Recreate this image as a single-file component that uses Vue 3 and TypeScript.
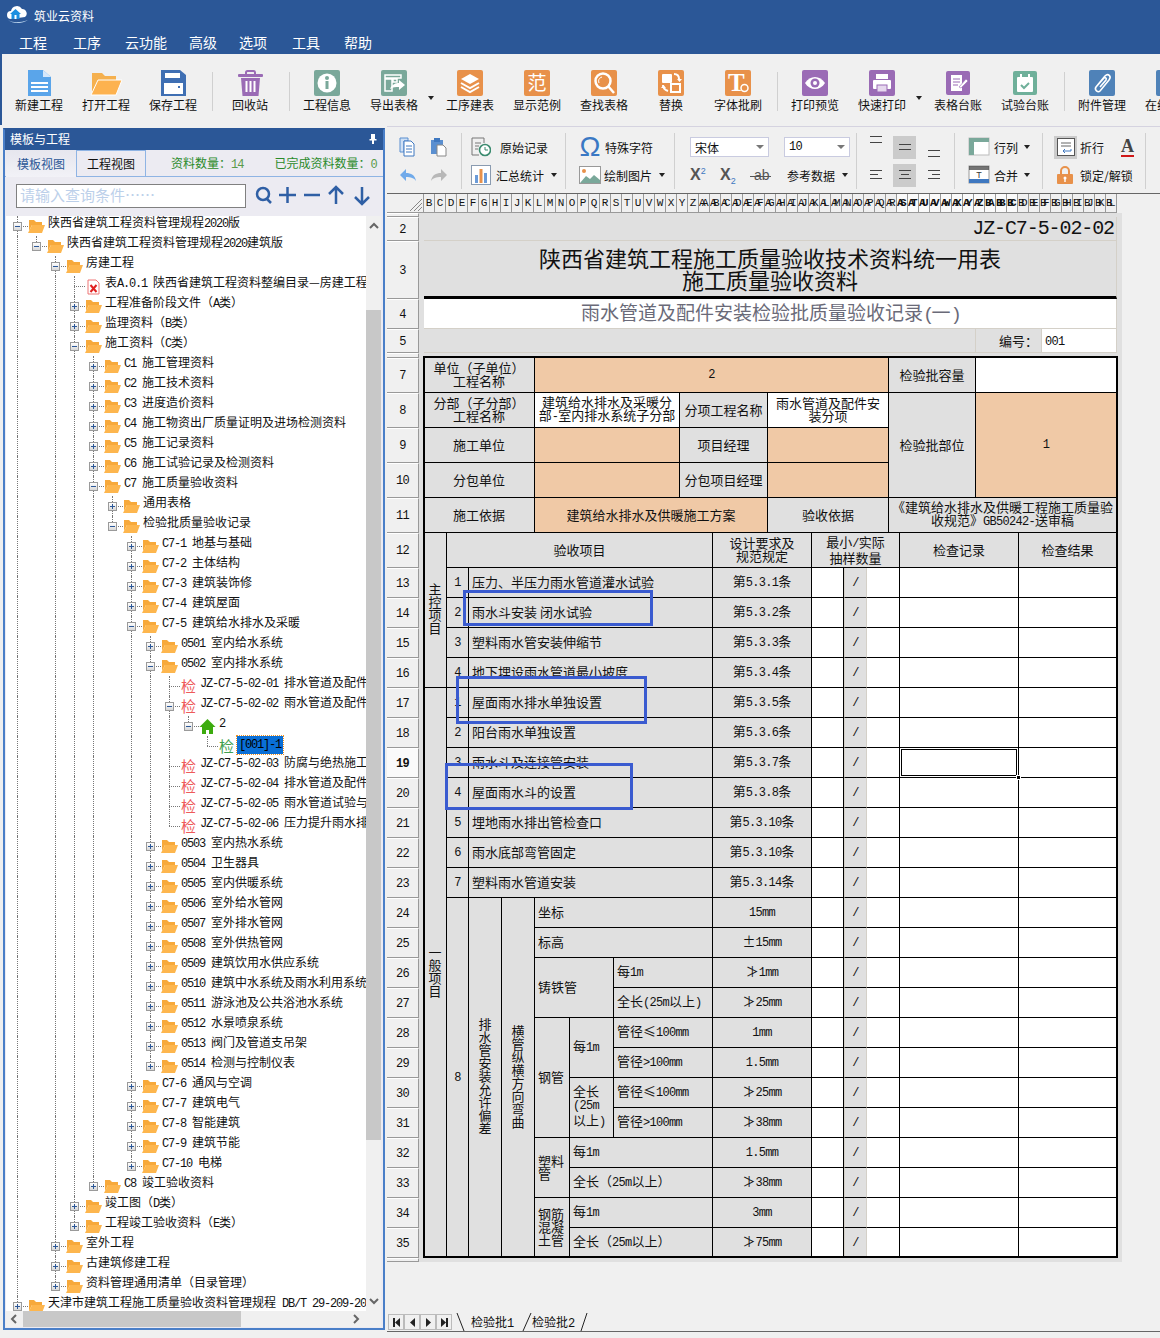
<template>
  <div class="app">
    <header class="titlebar">
      <div class="caption">
        <svg class="logo" width="22" height="18" viewBox="0 0 22 18">
          <path d="M4 13a4 4 0 010-8 6 6 0 0111-2 4.500 4.500 0 013 8z" fill="#fff" />
          <path d="M1 14c5 3 12 3 20 0-6 4-15 4-20 0z" fill="#cfe6fa" />
          <path d="M8.500 3l5.500 5h-1.500v5h-8V8H3z" fill="#1b8fe0" />
          <rect x="7.500" y="9" width="2" height="4" fill="#fff" />
        </svg>
        <span>筑业云资料</span>
      </div>
      <nav class="menu">
        <span v-for="m in menus" :key="m" class="menu-item">{{ m }}</span>
      </nav>
    </header>

    <div class="toolbar">
      <template v-for="(t, i) in tools" :key="i">
        <div v-if="t.sep" class="tool-sep"></div>
        <div v-else-if="t.caret" class="tool-caret"><i class="caret"></i></div>
        <div v-else class="tool">
          <svg :width="t.w || 26" height="26" :viewBox="`0 0 ${t.w || 26} 26`" v-html="t.svg"></svg>
          <span class="tool-label">{{ t.label }}</span>
        </div>
      </template>
    </div>

    <main class="main">
      <aside class="panel">
        <div class="panel-title">
          <span>模板与工程</span>
          <svg width="10" height="10" viewBox="0 0 10 10"><path d="M3 0h4v5h1.500v1.500h-2.500V10H4V6.500H1.500V5H3z" fill="#fff" /></svg>
        </div>
        <div class="panel-tabs">
          <div class="ptab on">模板视图</div>
          <div class="ptab">工程视图</div>
          <div class="stat stat-a">资料数量：<b>14</b></div>
          <div class="stat stat-b">已完成资料数量：<b>0</b></div>
        </div>
        <div class="search">
          <div class="search-input">请输入查询条件……</div>
          <svg class="search-icons" width="118" height="22" viewBox="0 0 118 22" fill="none" stroke="#2f5fa5" stroke-width="2.500">
            <circle cx="9" cy="10" r="6" />
            <path d="M13 15l4 4" />
            <path d="M25 11h17M33.500 3v16" />
            <path d="M50 11h16" />
            <path d="M82 20V4M75 10l7-7 7 7" />
            <path d="M108 3v16M101 13l7 7 7-7" />
          </svg>
        </div>
        <div class="tree-area">
          <div class="tree">
            <div v-for="(n, i) in flat" :key="i" class="node">
              <span v-for="(g, j) in n.guides" :key="j" class="guide" :class="{ on: g }"></span>
              <span class="branch" :class="{ more: n.more }">
                <span v-if="n.box" class="box" :class="{ plus: n.box === '+' }"></span>
              </span>
              <svg v-if="n.kind === 'folder'" class="ico" width="17" height="14" viewBox="0 0 17 14">
                <path d="M1 1h5l2 2h6v3H4L1 12z" fill="#f7a93b" />
                <path d="M4 6h13l-3 8H0z" fill="#fdb64e" />
              </svg>
              <svg v-else-if="n.kind === 'pdf'" class="ico" width="16" height="16" viewBox="0 0 16 16">
                <path d="M2.500 1h8l3 3v11h-11z" fill="#fff" stroke="#ee7777" />
                <path d="M5 6l6 7M11 6l-6 7" stroke="#e02020" stroke-width="2" />
              </svg>
              <svg v-else-if="n.kind === 'home'" class="ico" width="17" height="16" viewBox="0 0 17 16">
                <path d="M8.500 0l8 8H14v7h-4v-4H7v4H3V8H.500z" fill="#3cab0e" />
              </svg>
              <span v-else class="jian" :class="{ ok: n.kind === 'pass' }">检</span>
              <span class="label" :class="{ sel: n.kind === 'pass' }">
                <span v-for="(p, j) in parts(n.text)" :key="j" :class="{ lat: p.lat }">{{ p.s }}</span>
              </span>
            </div>
          </div>
          <div class="vbar">
            <svg class="chev" width="10" height="20" viewBox="0 0 10 20"><path d="M1 12l4-4 4 4" fill="none" stroke="#666" stroke-width="2" /></svg>
            <div class="vthumb"></div>
            <svg class="chev chev-end" width="10" height="20" viewBox="0 0 10 20"><path d="M1 8l4 4 4-4" fill="none" stroke="#666" stroke-width="2" /></svg>
          </div>
        </div>
        <div class="hbar">
          <svg width="17" height="16" viewBox="0 0 17 16"><path d="M10 4L6 8l4 4" fill="none" stroke="#666" stroke-width="2" /></svg>
          <div class="hthumb"></div>
          <svg class="hbar-r" width="12" height="16" viewBox="0 0 12 16"><path d="M4 4l4 4-4 4" fill="none" stroke="#666" stroke-width="2" /></svg>
        </div>
      </aside>

      <section class="work">
        <div class="bar2">
          <div class="g g1">
            <svg width="20" height="20" viewBox="0 0 20 20" v-html="ic.copy"></svg>
            <svg width="20" height="20" viewBox="0 0 20 20" v-html="ic.paste"></svg>
            <svg width="20" height="18" viewBox="0 0 20 18" v-html="ic.undo"></svg>
            <svg width="20" height="18" viewBox="0 0 20 18" v-html="ic.redo"></svg>
          </div>
          <div class="g g2">
            <div class="rowi gap9"><svg width="20" height="20" viewBox="0 0 20 20" v-html="ic.record"></svg>原始记录</div>
            <div class="rowi gap5"><svg width="20" height="20" viewBox="0 0 20 20" v-html="ic.stat"></svg>汇总统计<i class="caret c-l"></i></div>
          </div>
          <div class="g g3">
            <div class="rowi gap4"><span class="omega">Ω</span>特殊字符</div>
            <div class="rowi gap3"><svg width="22" height="20" viewBox="0 0 22 20" v-html="ic.pic"></svg>绘制图片<i class="caret c-l"></i></div>
          </div>
          <div class="g g4">
            <div class="rowi">
              <div class="select s-font"><span>宋体</span><i class="caret gray"></i></div>
              <div class="select s-size"><span class="lat">10</span><i class="caret gray"></i></div>
            </div>
            <div class="rowi">
              <span class="fx">X<sup>2</sup></span>
              <span class="fx">X<sub>2</sub></span>
              <span class="fx strike">ab</span>
              <span class="ref">参考数据</span><i class="caret c-l"></i>
            </div>
          </div>
          <div class="g g5">
            <span v-for="(a, i) in aligns" :key="i" class="al" :class="a.cls">
              <svg width="18" height="12" viewBox="0 0 18 12" fill="none" stroke="#444"><path :d="a.d" /></svg>
            </span>
          </div>
          <div class="g g6">
            <div class="rowi gap3"><svg width="24" height="20" viewBox="0 0 24 20" v-html="ic.rows"></svg>行列<i class="caret c-l2"></i></div>
            <div class="rowi gap3"><svg width="24" height="20" viewBox="0 0 24 20" v-html="ic.merge"></svg>合并<i class="caret c-l2"></i></div>
          </div>
          <div class="g g7">
            <div class="rowi">
              <span class="wrapb"><svg width="18" height="18" viewBox="0 0 18 18" v-html="ic.wrap"></svg></span>
              <span class="wrapt">折行</span>
              <span class="fontA">A</span>
            </div>
            <div class="rowi lockrow"><svg width="16" height="18" viewBox="0 0 16 18" v-html="ic.lock"></svg>锁定/解锁</div>
          </div>
        </div>

        <div class="colhdr">
          <div class="corner">
            <svg width="14" height="14" viewBox="0 0 14 14" fill="none" stroke="#888"><path d="M1 13L13 1M5 13l8-8M9 13l4-4" /></svg>
          </div>
          <div v-for="c in cols" :key="c.name" class="colcell" :class="{ wide: c.name.length > 1, cur: c.cur }">{{ c.name }}</div>
        </div>

        <div class="sheet">
          <div v-for="r in 36" :key="'r' + r" class="rowhdr" :class="{ cur: r === 19 }" :style="{ gridRow: r }">
            <span v-if="r > 1 && r !== 6 && r !== 36" class="lat">{{ r }}</span>
          </div>
          <div v-for="(c, i) in cells" :key="i" class="cell" :class="c.cls"
            :style="{ gridRow: `${c.r} / span ${c.rs}`, gridColumn: `${c.c1} / ${c.c2}` }">
            <div class="txt">
              <span v-for="(p, j) in parts(c.t)" :key="j" :class="{ lat: p.lat }">{{ p.s }}</span>
            </div>
          </div>
          <div class="frame"></div>
          <div class="mark mark-a"></div>
          <div class="mark mark-b"></div>
          <div class="mark mark-c"></div>
        </div>

        <div class="tabs">
          <div class="nav">
            <span v-for="(d, i) in navIcons" :key="i" class="nav-btn">
              <svg width="9" height="9" viewBox="0 0 9 9"><path :d="d" fill="#222" /></svg>
            </span>
          </div>
          <svg class="slant" width="9" height="18" viewBox="0 0 9 18"><path d="M1 0l7 18" stroke="#222" /></svg>
          <span class="stab st1"><span>检验批</span><span class="lat">1</span></span>
          <svg class="slant" width="11" height="18" viewBox="0 0 11 18"><path d="M10 0L2 18" stroke="#222" /></svg>
          <span class="stab st2"><span>检验批</span><span class="lat">2</span></span>
          <svg class="slant" width="8" height="18" viewBox="0 0 8 18"><path d="M7 0L1 18" stroke="#222" /></svg>
        </div>
      </section>
    </main>
  </div>
</template>

<script setup lang="ts">
type Cell = { r: number; rs: number; c1: number; c2: number; t: string; cls: string }

const menus = ['工程', '工序', '云功能', '高级', '选项', '工具', '帮助']

// toolbar glyphs, each tile is 26x26
const tile = (c: string, inner: string, w = 26) => `<rect width="${w}" height="26" rx="2" fill="${c}"/>${inner}`
const ORANGE = '#e8914a'
const TEAL = '#7aa89a'
const PURPLE = '#9a6bb5'

const tools: Array<{ label?: string; svg?: string; w?: number; sep?: boolean; caret?: boolean }> = [
  { label: '新建工程', w: 25, svg: '<path d="M1 0h15l8 7v19H1z" fill="#5aa5ea"/><path d="M16 0l8 7h-8z" fill="#d6e8fb"/><path d="M4 13h17M4 17h17M4 21h17" stroke="#fff" stroke-width="2"/>' },
  { label: '打开工程', w: 32, svg: '<path d="M2 3h10l3 3h11v5H8L2 24z" fill="#f5b04e"/><path d="M8 10h24l-6 15H1z" fill="#fdb24f" stroke="#fff"/>' },
  { label: '保存工程', w: 25, svg: '<path d="M0 0h19l6 5v21H0z" fill="#3f6fb3"/><rect x="4" y="3" width="15" height="5" fill="#fff"/><rect x="3" y="13" width="19" height="11" fill="#fff"/><rect x="17" y="16" width="2" height="2" fill="#3f6fb3"/>' },
  { sep: true },
  { label: '回收站', w: 25, svg: `<path d="M8 4V2.500A1.500 1.500 0 019.500 1h6A1.500 1.500 0 0117 2.500V4" fill="none" stroke="${PURPLE}" stroke-width="2"/><rect y="4" width="25" height="3" rx="1" fill="${PURPLE}"/><path d="M3 8h19l-1.500 18h-16z" fill="${PURPLE}"/><path d="M8.500 11v11M12.500 11v11M16.500 11v11" stroke="#fff" stroke-width="2"/>` },
  { sep: true },
  { label: '工程信息', svg: tile(TEAL, `<circle cx="13" cy="13" r="9.500" fill="#fff"/><circle cx="13" cy="8" r="2" fill="${TEAL}"/><rect x="11.500" y="11" width="3" height="8" fill="${TEAL}"/>`) },
  { label: '导出表格', svg: tile(TEAL, '<path d="M4 5h16v3H4zM4 9h7v12H4zM12 9h4v3h-4z" fill="none" stroke="#fff" stroke-width="1.500"/><path d="M9 19c2-5 6-6 9-6v-3l6 5-6 5v-3c-3 0-6 0-9 2z" fill="#fff"/>') },
  { caret: true },
  { label: '工序建表', svg: tile(ORANGE, '<path d="M13 4l9 5-9 5-9-5z" fill="#fff"/><path d="M4 13l9 5 9-5M4 17l9 5 9-5" stroke="#fff" fill="none" stroke-width="2"/>') },
  { label: '显示范例', svg: tile(ORANGE, '<text x="13" y="20" font-size="19" fill="#fff" text-anchor="middle" font-family="Noto Sans CJK SC">范</text>') },
  { label: '查找表格', svg: tile(ORANGE, '<circle cx="12" cy="11" r="7.500" fill="none" stroke="#fff" stroke-width="2.500"/><path d="M17 16l6 7" stroke="#fff" stroke-width="2.500"/><path d="M8 13c-1-3 0-5 3-6" stroke="#fff" fill="none"/>') },
  { label: '替换', svg: tile(ORANGE, '<rect x="4" y="4" width="10" height="9" rx="1" fill="#fff"/><rect x="13" y="14" width="9" height="8" fill="none" stroke="#fff" stroke-width="2"/><path d="M16 4c3 0 5 2 5 5M5 15c0 3 2 5 5 6" fill="none" stroke="#fff" stroke-width="2"/><path d="M19 9h5l-2.500 3zM3 18h5l-2.500-3z" fill="#fff"/>') },
  { label: '字体批刷', svg: tile(ORANGE, '<text x="3" y="21" font-size="25" font-weight="700" fill="#fff" font-family="Liberation Serif">T</text><circle cx="19.500" cy="18" r="3.500" fill="none" stroke="#fff" stroke-width="1.500"/>') },
  { sep: true },
  { label: '打印预览', svg: tile(PURPLE, `<path d="M3 13c5-8 15-8 20 0-5 8-15 8-20 0z" fill="#fff"/><circle cx="13" cy="13" r="4.500" fill="${PURPLE}"/><circle cx="13" cy="13" r="2" fill="#fff"/>`) },
  { label: '快速打印', svg: tile(PURPLE, '<rect x="7" y="4" width="12" height="5" fill="#fff"/><rect x="4" y="10" width="18" height="9" rx="1" fill="#fff"/><rect x="8" y="15" width="10" height="7" fill="#e6d8ee" stroke="#9a6bb5"/>') },
  { caret: true },
  { label: '表格台账', svg: `<rect x="1" y="1" width="24" height="24" rx="2" fill="${PURPLE}"/><path d="M6 5h11v16H6z" fill="#fff"/><path d="M8 9h7M8 12h7M8 15h5" stroke="${PURPLE}"/><path d="M14 17l7-8 2 2-7 7z" fill="#fff" stroke="${PURPLE}" stroke-width=".6"/>` },
  { label: '试验台账', svg: `<rect x="1" y="1" width="24" height="24" rx="2" fill="#6fb09a"/><rect x="5" y="7" width="16" height="15" rx="1" fill="#fff"/><path d="M9 4v6M17 4v6" stroke="#fff" stroke-width="2"/><path d="M9 15l3 3 5-5" fill="none" stroke="#6fb09a" stroke-width="2"/>` },
  { sep: true },
  { label: '附件管理', svg: tile('#4f82b8', '<path d="M7 17L16 6c3-3 7 0 4 4L11 21c-2 2-6-1-4-4l8-9c1-1 3 0 2 2l-6 7" fill="none" stroke="#fff" stroke-width="1.600"/>') },
  { label: '在线客服', svg: tile('#4f82b8', '') },
]

const ic: Record<string, string> = {
  copy: '<path d="M2 1h8v3h-4v11H2z" fill="#cfe0f5" stroke="#5a8fd0"/><path d="M6 4h7l3 3v12H6z" fill="#fff" stroke="#3f78c0"/><path d="M8 9h6M8 12h6M8 15h6" stroke="#3f78c0"/>',
  paste: '<path d="M2 3h12v14H2z" fill="#5a8fd0"/><rect x="5" y="1" width="6" height="4" fill="#3f78c0"/><path d="M8 8h6l3 3v8H8z" fill="#fff" stroke="#888"/>',
  undo: '<path d="M2 9l6-6v4c5 0 9 2 10 8-2-3-5-4-10-4v4z" fill="#70aaea"/>',
  redo: '<path d="M18 9l-6-6v4C7 7 3 9 2 15c2-3 5-4 10-4v4z" fill="#b8b8b8"/>',
  record: '<path d="M1 1h12v5" fill="none" stroke="#777"/><path d="M1 1v17h7" fill="none" stroke="#777"/><path d="M4 6h6M4 9h4M4 12h3" stroke="#777"/><circle cx="14" cy="13" r="5.500" fill="#fff" stroke="#3b8b6f" stroke-width="1.600"/><path d="M14 10v3h3" fill="none" stroke="#3b8b6f"/>',
  stat: '<rect x=".5" y=".5" width="19" height="19" fill="#fff" stroke="#8a9bb0"/><rect x="4" y="10" width="3" height="8" fill="#6b9bd8"/><rect x="8.500" y="4" width="3" height="14" fill="#e8914a"/><rect x="13" y="8" width="3" height="10" fill="#6b9bd8"/>',
  pic: '<rect x=".5" y="1.500" width="21" height="17" fill="#fff" stroke="#999"/><path d="M1 18l6-7 4 3 4-4 6 5v3z" fill="#7aa89a"/><circle cx="5" cy="6" r="2" fill="#e8914a"/>',
  rows: '<rect x="2" y="1" width="20" height="17" fill="#fff" stroke="#bbb"/><rect x="2" y="1" width="20" height="4" fill="#7aa89a"/><rect x="2" y="1" width="5" height="17" fill="#7aa89a"/>',
  merge: '<rect x="2" y="1" width="20" height="17" fill="#fff" stroke="#999"/><rect x="2" y="1" width="20" height="4" fill="#444" opacity=".75"/><rect x="2" y="14" width="20" height="4" fill="#3f78c0"/><text x="12" y="13" font-size="9" text-anchor="middle" fill="#333" font-family="Liberation Sans">T</text>',
  wrap: '<rect x=".5" y=".5" width="17" height="17" fill="#fff" stroke="#555"/><path d="M4 5h10M4 8h10" stroke="#666"/><path d="M14 11v2H6m2-2l-2 2 2 2" fill="none" stroke="#3f78c0"/>',
  lock: '<path d="M4 8V5a4 4 0 018 0v3" fill="none" stroke="#e8914a" stroke-width="2"/><rect x="0" y="8" width="16" height="10" rx="1" fill="#e8914a"/><circle cx="8" cy="12" r="1.500" fill="#fff"/><rect x="7.300" y="12" width="1.400" height="4" fill="#fff"/>',
}

const aligns = [
  { d: 'M3 2.500h12M3 8.500h12', cls: 'a-top' },
  { d: 'M3 3.500h12M3 8.500h12', cls: 'a-mid on' },
  { d: 'M3 3.500h12M3 9.500h12', cls: 'a-bot' },
  { d: 'M3 1.500h12M3 5.500h8M3 9.500h12', cls: '' },
  { d: 'M3 1.500h12M5 5.500h8M3 9.500h12', cls: 'on' },
  { d: 'M3 1.500h12M7 5.500h8M3 9.500h12', cls: '' },
]

const navIcons = ['M1 0h2v9H1zM8 0v9L3 4.500z', 'M7 0v9L2 4.500z', 'M2 0v9l5-4.500z', 'M1 0v9l5-4.500zM6 0h2v9H6z']

// split a string into latin and CJK runs, so latin gets its half-width font
function parts(s: string) {
  const out = s.match(/[\x20-\x7e]+|[^\x20-\x7e]+/g) || []
  return out.map(p => ({ s: p, lat: /^[\x20-\x7e]/.test(p) && p.trim() !== '' }))
}

// tree: [level, text, kind]. kinds: f closed, o open, p pdf, j check, J check open, h home, s selected check
const raw: Array<[number, string, string]> = [
  [0, '陕西省建筑工程资料管理规程2020版', 'o'],
  [1, '陕西省建筑工程资料管理规程2020建筑版', 'o'],
  [2, '房建工程', 'o'],
  [3, '表A.0.1 陕西省建筑工程资料整编目录—房建工程', 'p'],
  [3, '工程准备阶段文件（A类）', 'f'],
  [3, '监理资料（B类）', 'f'],
  [3, '施工资料（C类）', 'o'],
  [4, 'C1 施工管理资料', 'f'],
  [4, 'C2 施工技术资料', 'f'],
  [4, 'C3 进度造价资料', 'f'],
  [4, 'C4 施工物资出厂质量证明及进场检测资料', 'f'],
  [4, 'C5 施工记录资料', 'f'],
  [4, 'C6 施工试验记录及检测资料', 'f'],
  [4, 'C7 施工质量验收资料', 'o'],
  [5, '通用表格', 'f'],
  [5, '检验批质量验收记录', 'o'],
  [6, 'C7-1 地基与基础', 'f'],
  [6, 'C7-2 主体结构', 'f'],
  [6, 'C7-3 建筑装饰修', 'f'],
  [6, 'C7-4 建筑屋面', 'f'],
  [6, 'C7-5 建筑给水排水及采暖', 'o'],
  [7, '0501 室内给水系统', 'f'],
  [7, '0502 室内排水系统', 'o'],
  [8, 'JZ-C7-5-02-01 排水管道及配件', 'j'],
  [8, 'JZ-C7-5-02-02 雨水管道及配件', 'J'],
  [9, '2', 'h'],
  [10, '[001]-1', 's'],
  [8, 'JZ-C7-5-02-03 防腐与绝热施工', 'j'],
  [8, 'JZ-C7-5-02-04 排水管道及配件', 'j'],
  [8, 'JZ-C7-5-02-05 雨水管道试验与', 'j'],
  [8, 'JZ-C7-5-02-06 压力提升雨水排', 'j'],
  [7, '0503 室内热水系统', 'f'],
  [7, '0504 卫生器具', 'f'],
  [7, '0505 室内供暖系统', 'f'],
  [7, '0506 室外给水管网', 'f'],
  [7, '0507 室外排水管网', 'f'],
  [7, '0508 室外供热管网', 'f'],
  [7, '0509 建筑饮用水供应系统', 'f'],
  [7, '0510 建筑中水系统及雨水利用系统', 'f'],
  [7, '0511 游泳池及公共浴池水系统', 'f'],
  [7, '0512 水景喷泉系统', 'f'],
  [7, '0513 阀门及管道支吊架', 'f'],
  [7, '0514 检测与控制仪表', 'f'],
  [6, 'C7-6 通风与空调', 'f'],
  [6, 'C7-7 建筑电气', 'f'],
  [6, 'C7-8 智能建筑', 'f'],
  [6, 'C7-9 建筑节能', 'f'],
  [6, 'C7-10 电梯', 'f'],
  [4, 'C8 竣工验收资料', 'f'],
  [3, '竣工图（D类）', 'f'],
  [3, '工程竣工验收资料（E类）', 'f'],
  [2, '室外工程', 'f'],
  [2, '古建筑修建工程', 'f'],
  [2, '资料管理通用清单（目录管理）', 'f'],
  [0, '天津市建筑工程施工质量验收资料管理规程 DB/T 29-209-20', 'f'],
]

// does a sibling at `lvl` still follow after row i?
function followed(i: number, lvl: number) {
  for (let k = i + 1; k < raw.length; k++) {
    if (raw[k][0] < lvl) return false
    if (raw[k][0] === lvl) return true
  }
  return false
}

const flat = raw.map(([lvl, text, k], i) => ({
  text,
  kind: k === 'f' || k === 'o' ? 'folder' : k === 'p' ? 'pdf' : k === 'h' ? 'home' : k === 's' ? 'pass' : 'check',
  box: k === 'f' ? '+' : k === 'o' || k === 'J' || k === 'h' ? '-' : '',
  more: followed(i, lvl),
  guides: Array.from({ length: lvl }, (_, l) => followed(i, l)),
}))

function colName(n: number) {
  return n < 26 ? String.fromCharCode(65 + n) : String.fromCharCode(64 + Math.floor(n / 26)) + String.fromCharCode(65 + (n % 26))
}
const cols = Array.from({ length: 63 }, (_, i) => ({ name: colName(i + 1), cur: i >= 43 && i <= 53 }))

// names of the sheet's column lines, in the order the grid template has them
const xs = [424, 447, 469, 502, 535, 569, 613, 679, 713, 767, 812, 844, 867, 888, 899, 975, 1018, 1041, 1117]
const cells: Cell[] = []
function put(r: number, x1: number, x2: number, t: string, cls = '', rs = 1) {
  cells.push({ r, rs, c1: xs.indexOf(x1) + 3, c2: xs.indexOf(x2) + 3, t, cls })
}

put(2, 424, 1117, 'JZ-C7-5-02-02', 'lt code')
put(3, 424, 1117, '陕西省建筑工程施工质量验收技术资料统一用表\n施工质量验收资料', 'lt title')
put(4, 424, 1117, '雨水管道及配件安装检验批质量验收记录(一)', 'lt sub')
put(5, 424, 975, '', 'lt')
put(5, 975, 1041, '编号：', 'lt lbl')
put(5, 1041, 1117, '001', 'lt w l')

put(7, 424, 535, '单位（子单位）\n工程名称')
put(7, 535, 888, '2', 'o')
put(7, 888, 975, '检验批容量')
put(7, 975, 1117, '', 'w')
put(8, 424, 535, '分部（子分部）\n工程名称')
put(8, 535, 679, '建筑给水排水及采暖分\n部-室内排水系统子分部', 'w')
put(8, 679, 767, '分项工程名称')
put(8, 767, 888, '雨水管道及配件安\n装分项', 'w')
put(8, 888, 975, '检验批部位', '', 3)
put(8, 975, 1117, '1', 'o', 3)
put(9, 424, 535, '施工单位')
put(9, 535, 679, '', 'o')
put(9, 679, 767, '项目经理')
put(9, 767, 888, '', 'o')
put(10, 424, 535, '分包单位')
put(10, 535, 679, '', 'o')
put(10, 679, 767, '分包项目经理')
put(10, 767, 888, '', 'o')
put(11, 424, 535, '施工依据')
put(11, 535, 767, '建筑给水排水及供暖施工方案', 'o')
put(11, 767, 888, '验收依据')
put(11, 888, 1117, '《建筑给水排水及供暖工程施工质量验\n收规范》GB50242-送审稿')

put(12, 424, 447, '主控项目', 'v', 5)
put(17, 424, 447, '一般项目', 'v', 19)
put(12, 447, 713, '验收项目')
put(12, 713, 812, '设计要求及\n规范规定')
put(12, 812, 899, '最小/实际\n抽样数量')
put(12, 899, 1018, '检查记录')
put(12, 1018, 1117, '检查结果')

const main: Array<[string, string, string]> = [
  ['1', '压力、半压力雨水管道灌水试验', '第5.3.1条'],
  ['2', '雨水斗安装 闭水试验', '第5.3.2条'],
  ['3', '塑料雨水管安装伸缩节', '第5.3.3条'],
  ['4', '地下埋设雨水管道最小坡度', '第5.3.4条'],
  ['1', '屋面雨水排水单独设置', '第5.3.5条'],
  ['2', '阳台雨水单独设置', '第5.3.6条'],
  ['3', '雨水斗及连接管安装', '第5.3.7条'],
  ['4', '屋面雨水斗的设置', '第5.3.8条'],
  ['5', '埋地雨水排出管检查口', '第5.3.10条'],
  ['6', '雨水底部弯管固定', '第5.3.10条'],
  ['7', '塑料雨水管道安装', '第5.3.14条'],
]
main.forEach(([n, name, req], i) => {
  put(13 + i, 447, 469, n)
  put(13 + i, 469, 713, name, 'l')
  put(13 + i, 713, 812, req)
})

put(24, 447, 469, '8', '', 12)
put(24, 469, 502, '排水管安装允许偏差', 'v', 12)
put(24, 502, 535, '横管纵横方向弯曲', 'v', 12)
put(24, 535, 713, '坐标', 'l')
put(25, 535, 713, '标高', 'l')
put(26, 535, 613, '铸铁管', 'l', 2)
put(26, 613, 713, '每1m', 'l')
put(27, 613, 713, '全长(25m以上)', 'l')
put(28, 535, 569, '钢管', 'l', 4)
put(28, 569, 613, '每1m', 'l', 2)
put(30, 569, 613, '全长\n(25m\n以上)', 'l', 2)
put(28, 613, 713, '管径≤100mm', 'l')
put(29, 613, 713, '管径>100mm', 'l')
put(30, 613, 713, '管径≤100mm', 'l')
put(31, 613, 713, '管径>100mm', 'l')
put(32, 535, 569, '塑料\n管', 'l', 2)
put(32, 569, 713, '每1m', 'l')
put(33, 569, 713, '全长（25m以上）', 'l')
put(34, 535, 569, '钢筋\n混凝\n土管', 'l', 2)
put(34, 569, 713, '每1m', 'l')
put(35, 569, 713, '全长（25m以上）', 'l')
const reqs = ['15mm', '±15mm', '≯1mm', '≯25mm', '1mm', '1.5mm', '≯25mm', '≯38mm', '1.5mm', '≯38mm', '3mm', '≯75mm']
reqs.forEach((t, i) => put(24 + i, 713, 812, t))

for (let r = 13; r <= 35; r++) {
  put(r, 812, 844, '', 'w')
  put(r, 844, 867, '/', 'slash')
  put(r, 867, 899, '', 'w')
  put(r, 899, 1018, '', r === 19 ? 'w act' : 'w')
  put(r, 1018, 1117, '', 'w')
}
</script>

<style>
html, body { margin: 0; background: #f0f0f0; }
</style>

<style scoped>
.app { width: 1160px; height: 1338px; overflow: hidden; display: flex; flex-direction: column; background: #f0f0f0; color: #111; font-family: "Noto Sans CJK SC", "Liberation Sans", sans-serif; font-size: 13px; }
.lat { font-family: "Liberation Mono", monospace; font-size: 12px; letter-spacing: -.7px; }

.titlebar { height: 54px; flex: none; background: #2b5797; color: #fff; }
.caption { height: 30px; display: flex; align-items: center; font-size: 12px; padding-left: 7px; gap: 5px; }
.menu { display: flex; height: 24px; align-items: center; font-size: 14px; padding-left: 19px; }
.menu-item { margin-right: 26px; }
.menu-item:nth-child(2) { margin-right: 24px; }
.menu-item:nth-child(3) { margin-right: 22px; }
.menu-item:nth-child(4) { margin-right: 22px; }
.menu-item:nth-child(5) { margin-right: 25px; }
.menu-item:nth-child(6) { margin-right: 24px; }

.toolbar { height: 71px; flex: none; display: flex; padding: 16px 0 0 5.500px; border-left: 2px solid #2b5797; box-sizing: border-box; overflow: hidden; width: 1160px; }
.toolbar > :first-child { margin-left: -2px; }
.tool { width: 67px; flex: none; display: flex; flex-direction: column; align-items: center; }
.tool-label { font-size: 12px; line-height: 16px; white-space: nowrap; margin-top: 1px; }
.tool-sep { width: 10px; flex: none; position: relative; }
.tool-sep::after { content: ""; position: absolute; left: 5px; top: 2px; height: 39px; width: 1px; background: #d0d0d0; }
.tool-caret { width: 9px; flex: none; padding-top: 15px; }
.caret { display: inline-block; width: 0; height: 0; border: 3px solid transparent; border-top: 4px solid #222; border-bottom: 0; }
.caret.gray { border-top-color: #777; border-left-width: 4px; border-right-width: 4px; }

.main { flex: 1; display: flex; min-height: 0; }
.panel { width: 382px; height: 1202px; margin: 3px 0 0 3px; flex: none; box-sizing: border-box; background: #ecebf2; border: 2px solid #4a7fc8; border-top-color: #2b5797; display: flex; flex-direction: column; }
.panel-title { height: 20px; flex: none; background: #2b5797; color: #fff; font-size: 12px; line-height: 18px; display: flex; align-items: flex-start; justify-content: space-between; padding: 0 5px; }
.panel-title svg { margin-top: 4px; }
.panel-tabs { height: 27px; flex: none; display: flex; box-sizing: border-box; border-bottom: 1px solid #8fb4e4; padding-left: 1px; font-size: 12px; }
.ptab { width: 70px; box-sizing: border-box; display: flex; align-items: center; justify-content: center; }
.ptab.on { color: #2b5797; height: 27px; background: linear-gradient(#e6e6ee, #f2f2f7); }
.ptab:not(.on) { border: 1px solid #8fb4e4; border-bottom: 0; }
.stat { color: #2a8a2a; line-height: 26px; white-space: nowrap; }
.stat b { font: 12px "Liberation Mono", monospace; color: #5a9a4a; letter-spacing: -1px; }
.stat-a { margin-left: 25px; }
.stat-b { margin-left: 31px; }
.search { height: 39px; flex: none; display: flex; align-items: flex-start; padding: 7px 0 0 11px; box-sizing: border-box; }
.search-input { width: 230px; height: 24px; box-sizing: border-box; border: 1px solid #808080; background: #fff; color: #bcd0ea; font-size: 15px; line-height: 20px; padding-left: 3px; }
.search-icons { margin-left: 8px; flex: none; }

.tree-area { flex: 1; min-height: 0; display: flex; padding-left: 1px; padding-right: 2px; }
.tree { flex: 1; min-width: 0; background: #fff; overflow: hidden; font-size: 12px; }
.tree .lat { font-size: 12px; letter-spacing: -1.200px; }
.node { height: 20px; display: flex; padding-left: 11px; white-space: nowrap; }
.guide { width: 19px; flex: none; box-sizing: border-box; }
.guide.on { border-left: 1px dotted #777; }
.branch { width: 11px; flex: none; position: relative; }
.branch::before { content: ""; position: absolute; left: 0; top: 0; bottom: 10px; border-left: 1px dotted #777; }
.branch.more::before { bottom: 0; }
.branch::after { content: ""; position: absolute; left: 0; right: 0; top: 10px; border-top: 1px dotted #777; }
.box { position: absolute; z-index: 1; left: -4px; top: 6px; width: 9px; height: 9px; box-sizing: border-box; border: 1px solid #9a9a9a; background: linear-gradient(#fff, #d8d8d8); }
.box::before { content: ""; position: absolute; left: 1px; right: 1px; top: 3px; height: 1px; background: #2b5797; }
.box.plus::after { content: ""; position: absolute; top: 1px; bottom: 1px; left: 3px; width: 1px; background: #2b5797; }
.ico { flex: none; margin-top: 3px; width: 17px; }
.jian { flex: none; width: 17px; font-size: 15px; line-height: 20px; color: #ee5a5a; text-align: center; }
.jian.ok { color: #3f9f4f; }
.label { margin-left: 3px; line-height: 13px; height: 16px; margin-top: -1px; }
.label.sel { height: 18px; margin-top: 0; margin-left: 2px; padding: 0 2px; background: #0a6fd6; outline: 1px dotted #f09020; color: #000; line-height: 14px; }

.vbar { width: 15px; flex: none; background: #f0f0f0; display: flex; flex-direction: column; align-items: center; }
.vthumb { width: 15px; height: 830px; margin-top: 74px; background: #c8c8c8; }
.chev { flex: none; }
.chev-end { margin-top: auto; }
.hbar { height: 16px; flex: none; margin: 0 2px 1px 1px; background: #f0f0f0; display: flex; align-items: center; }
.hthumb { width: 218px; height: 16px; background: #c8c8c8; }
.hbar-r { margin-left: 109px; }

.work { flex: 1; min-width: 0; margin: 1px 0 0 2px; display: flex; flex-direction: column; border-top: 1px solid #d5d3e0; }
.bar2 { height: 67px; flex: none; display: flex; padding-top: 6px; box-sizing: border-box; border-bottom: 1px solid #666; font-size: 12px; }
.g { height: 56px; box-sizing: border-box; border-right: 1px solid #d0d0d0; display: grid; grid-template-rows: 28px 28px; flex: none; }
.rowi { display: flex; align-items: center; white-space: nowrap; }
.gap9 svg { margin-right: 9px; }
.gap5 svg { margin-right: 5px; }
.gap4 .omega { margin-right: 4px; }
.gap3 svg { margin-right: 3px; }
.g1 { width: 75px; padding-left: 5px; grid-template-columns: 31px 31px; place-items: center; }
.g2 { width: 104px; padding-left: 9px; }
.g3 { width: 109px; padding-left: 13px; }
.g4 { width: 182px; padding-left: 15px; }
.g5 { width: 98px; padding-left: 4px; grid-template-columns: 29px 29px 29px; justify-items: center; align-items: center; }
.g6 { width: 88px; padding-left: 12px; }
.g7 { width: 103px; padding-left: 11px; }
.c-l { margin-left: 7px; }
.c-l2 { margin-left: 6px; }
.omega { font: 28px/28px "Liberation Sans", sans-serif; color: #3a78c4; width: 22px; text-align: center; }
.select { height: 20px; box-sizing: border-box; border: 1px solid #c9cbe0; background: #fff; display: flex; align-items: center; justify-content: space-between; padding: 0 4px; }
.s-font { width: 79px; margin-right: 15px; }
.s-size { width: 66px; }
.fx { width: 30px; font: 700 16px "Liberation Sans", sans-serif; color: #555; }
.fx sup, .fx sub { font-size: 9px; font-weight: 400; color: #3f78c0; line-height: 0; }
.fx.strike { position: relative; font-weight: 400; font-size: 14px; width: 37px; padding-left: 4px; box-sizing: border-box; }
.fx.strike::after { content: ""; position: absolute; left: 0; top: 9px; width: 21px; height: 1px; background: #555; }
.al { width: 23px; height: 23px; display: flex; align-items: center; justify-content: center; }
.al.on { background: #cbcbcb; }
.a-top { align-self: start; height: 14px; }
.a-bot { align-self: end; height: 16px; }
.wrapb { width: 23px; height: 23px; background: #cbcbcb; display: flex; align-items: center; justify-content: center; margin-right: 3px; }
.wrapt { width: 41px; }
.fontA { font: 700 18px/18px "Liberation Serif", serif; color: #444; border-bottom: 2px solid #d01818; }
.lockrow { padding-left: 3px; }
.lockrow svg { margin-right: 7px; }

.colhdr { height: 19px; flex: none; display: flex; background: #f0f0f0; }
.corner { width: 37px; box-sizing: border-box; border-right: 1px solid #999; border-bottom: 1px solid #999; display: flex; align-items: flex-end; justify-content: flex-end; flex: none; }
.colcell { width: 11px; flex: none; box-sizing: border-box; overflow: hidden; border-right: 1px solid #999; border-bottom: 1px solid #999; background: #f0f0f0; font: 11px/18px "Liberation Mono", monospace; text-align: center; color: #111; }
.colcell.wide { letter-spacing: -3.500px; text-align: left; }
.colcell.cur { background: #fafafa; font-weight: 700; }

.sheet { position: relative; flex: none; width: 735px; display: grid; background: #e0e0e0;
  grid-template-columns: 32px 5px 23px 22px 33px 33px 35px 44px 66px 33px 55px 44px 32px 23px 22px 11px 76px 43px 23px 75px 5px;
  grid-template-rows: 4px 24px 58px 30px 24px 5px repeat(6, 35px) repeat(23, 30px) 4px; }
.rowhdr { grid-column: 1; box-sizing: border-box; background: #f0f0f0; border-right: 1px solid #999; border-bottom: 1px solid #999; border-top: 1px solid #fff; display: flex; align-items: center; justify-content: center; overflow: hidden; padding-top: 1px; }
.rowhdr.cur { background: #fafafa; font-weight: 700; }
.cell { box-sizing: border-box; display: flex; align-items: center; justify-content: center; text-align: center; border-right: 1px solid #000; border-bottom: 1px solid #000; background: #e0e0e0; overflow: hidden; min-width: 0; min-height: 0; }
.txt { white-space: pre-line; line-height: 13px; margin-top: -2px; }
.cell.lt .txt { margin-top: 0; }
.cell.w { background: #fff; }
.cell.o { background: #f0c9a6; }
.cell.l { justify-content: flex-start; text-align: left; padding-left: 3px; }
.cell.lt { border-right: 1px solid #d4d0c8; border-bottom: 1px solid #d4d0c8; }
.cell.code { justify-content: flex-end; padding-right: 2px; }
.cell.code .lat { font-size: 20px; letter-spacing: -1.100px; }
.cell.code .txt { line-height: 24px; }
.cell.title { font-size: 22px; border-bottom: 3px solid #000; padding-bottom: 2px; }
.cell.title .txt { line-height: 22px; }
.cell.sub { background: #fff; color: #6a6a78; font-size: 19px; }
.cell.sub .txt { line-height: 24px; }
.cell.sub .lat { font-size: 19px; letter-spacing: -3px; }
.cell.lbl { justify-content: flex-end; padding-right: 3px; }
.cell.v .txt { writing-mode: vertical-rl; text-orientation: upright; line-height: 15px; }
.cell.slash { border-right-color: #d4d0c8; border-left: 1px solid #d4d0c8; }
.cell.act { position: relative; overflow: visible; box-shadow: inset 0 0 0 1px #fff, inset 0 0 0 2px #000; z-index: 1; }
.cell.act::after { content: ""; position: absolute; right: -3px; bottom: -3px; width: 3px; height: 3px; background: #000; border: 1px solid #fff; }
.frame { grid-column: 3 / 21; grid-row: 7 / 36; margin: -2px -1px 0 -1px; border: 2px solid #000; z-index: 2; pointer-events: none; }
.mark { position: absolute; border: 3px solid #3a5bd0; box-sizing: border-box; z-index: 3; }
.mark-a { left: 76px; top: 377px; width: 190px; height: 36px; }
.mark-b { left: 69px; top: 463px; width: 191px; height: 48px; }
.mark-c { left: 58px; top: 550px; width: 188px; height: 47px; }

.tabs { margin-top: auto; margin-bottom: 6px; height: 19px; flex: none; box-sizing: border-box; border-bottom: 1px solid #666; display: flex; align-items: flex-start; padding-left: 1px; font-size: 12px; }
.tabs .lat { letter-spacing: -1.200px; }
.nav { display: flex; width: 68px; flex: none; padding-top: 1px; }
.nav-btn { width: 16px; height: 16px; box-sizing: border-box; border: 1px solid #bbb; display: flex; align-items: center; justify-content: center; }
.slant { flex: none; }
.stab { line-height: 17px; white-space: nowrap; }
.st1 { margin-left: 6px; margin-right: 8px; }
.st2 { margin-right: 6px; }
</style>
